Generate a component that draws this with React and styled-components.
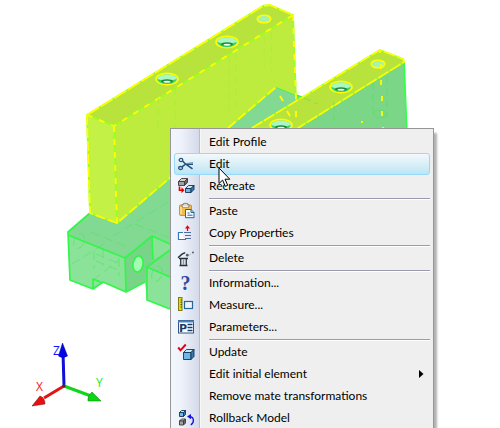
import styled, { createGlobalStyle } from "styled-components";

const GlobalStyle = createGlobalStyle`
  body {
    margin: 0;
    background: #ffffff;
    font-family: Lato, "Open Sans", sans-serif;
  }
`;

const Viewport = styled.main`
  position: relative;
  height: 100vh;
  overflow: hidden;
  background-color: #ffffff;
`;

const Drawing = styled.svg`
  display: block;
`;

const Menu = styled.div`
  position: absolute;
  left: 170px;
  top: 128px;
  box-sizing: border-box;
  min-width: 264px;
  padding: 2px 3px;
  border: 1px solid #979797;
  background: linear-gradient(
      to right,
      #f1f5fc 3px,
      #eef2fa 10px,
      #d5daea 28px,
      #b9bdd0 28px,
      #b9bdd0 29px,
      #f7f7f7 29px,
      #f7f7f7 30px,
      #efefef 30px
    )
    #efefef;
  box-shadow: 4px 4px 2px -1px rgba(0, 0, 0, 0.3);
`;

const Item = styled.button`
  display: grid;
  grid-template-columns: 24px 1fr 8px;
  column-gap: 8px;
  align-items: center;
  box-sizing: border-box;
  width: 100%;
  height: 22px;
  padding: 0 2px;
  border: 1px solid ${(props) => (props.$active ? "#96d9f9" : "transparent")};
  border-radius: 3px;
  background: ${(props) =>
    props.$active
      ? "linear-gradient(#f2f9fc, #dcf0f8 45%, #bbe5f5)"
      : "transparent"};
  color: #000000;
  font-family: inherit;
  font-size: 12px;
  line-height: 20px;
  text-align: left;
  white-space: nowrap;
`;

const Separator = styled.hr`
  height: 1px;
  margin: 1px 0 0 35px;
  border: none;
  border-bottom: 1px solid #ffffff;
  background-color: #9a9ab2;
`;

const Icon = styled.svg`
  display: block;
  width: 18px;
  height: 18px;
  overflow: visible;
`;

const Arrow = styled.svg`
  display: block;
  width: 5px;
  height: 8px;
`;

const Pointer = styled.svg`
  position: absolute;
  left: 218px;
  top: 167px;
  pointer-events: none;
`;

function Cube({ x, y, w, h, d = 3, top, front, side, line }) {
  return (
    <g stroke={line} strokeWidth="0.9" strokeLinejoin="round">
      <path d={`M${x} ${y + d}l${d} ${-d}h${w - d}l${-d} ${d}z`} fill={top} />
      <path d={`M${x} ${y + d}h${w - d}v${h - d}h${d - w}z`} fill={front} />
      <path d={`M${x + w - d} ${y + d}l${d} ${-d}v${h - d}l${-d} ${d}z`} fill={side} />
    </g>
  );
}

const blue = { top: "#c4e8fc", front: "#6bb8ec", side: "#3a7ab0", line: "#143654" };
const gray = { top: "#d2d2d2", front: "#a2a2a2", side: "#6a6a6a", line: "#3a3a3a" };

const icons = {
  edit: (
    <g fill="none" stroke="#24527e">
      <ellipse cx="4" cy="5" rx="1.8" ry="1.6" strokeWidth="1.3" />
      <ellipse cx="3.6" cy="13" rx="2" ry="1.5" strokeWidth="1.3" />
      <path d="M5.5 6l3 3 7 4.8M5 11.9l3.5-2.7h7.5" strokeWidth="1.6" />
      <path d="M9 8.6l7-1" stroke="#6f91ae" />
    </g>
  ),
  recreate: (
    <>
      <Cube x={1.5} y={1.5} w={9} h={7} {...gray} />
      <Cube x={8.5} y={8.5} w={8.5} h={7} {...blue} />
      <path d="M2.5 9.5v3.7h3" fill="none" stroke="#e00000" strokeWidth="1.6" />
      <path d="M4.5 10.3l3 3-3 3z" fill="#e00000" />
    </>
  ),
  paste: (
    <>
      <rect x="2.5" y="3" width="12" height="10.5" rx="1" fill="#f0bd55" stroke="#ca9537" />
      <path d="M4 5v7" stroke="#ffe09a" strokeWidth="1.5" />
      <path d="M5 5V2.5h1.5V1.4h4v1.1H12V5z" fill="#e1dac9" stroke="#8c8371" />
      <path d="M6 4.5h5" stroke="#f6f2e5" />
      <path d="M8.5 7.5H14l3 3v5.2H8.5z" fill="#f5fbff" stroke="#28678f" />
      <path d="M14 7.5v3h3M10.5 11h2M10.5 13.2h5" fill="none" stroke="#28678f" />
    </>
  ),
  copy: (
    <>
      <path d="M6 8.5H1.5v7h7V15" fill="none" stroke="#3477ba" strokeWidth="1.2" />
      <path d="M2 9h4v5h2v1H2z" fill="#ffffff" />
      <path d="M7 8.5h7M8 11.5h6M8 14.5h6" stroke="#526da4" />
      <path d="M10.5 3v4" stroke="#e60000" strokeWidth="1.2" />
      <path d="M8 4.5l2.5-3.2L13 4.5z" fill="#ef0000" />
    </>
  ),
  remove: (
    <>
      <path d="M1 8.8l4-3.6 3.2-1.6" fill="none" stroke="#26333b" strokeWidth="1.5" />
      <path d="M3.5 9.5h6V16h-6z" fill="#d8dce2" />
      <path d="M2 9.5h9M2.5 16.5h8" stroke="#26333b" strokeWidth="1.3" />
      <path d="M3.7 10v6M9.3 10v6" stroke="#26333b" strokeWidth="1.2" />
      <path d="M6.5 10.5v5.5" stroke="#8d969e" />
      <circle cx="10.3" cy="6.2" r="1.4" fill="#52616e" />
      <path d="M12.5 6l1.2-1" stroke="#9aa5b1" />
      <circle cx="16" cy="3.6" r="1" fill="#52616e" />
    </>
  ),
  information: (
    <text x="8.5" y="16" textAnchor="middle" fontFamily="Liberation Serif, serif" fontSize="20" fontWeight="700" fill="#2c4b9e">
      ?
    </text>
  ),
  measure: (
    <>
      <rect x="1.5" y="1.5" width="3.5" height="13" fill="#e7df00" stroke="#807b16" />
      <path d="M3.5 4H5M3.5 6.3H5M3.5 8.6H5M3.5 11H5" stroke="#555000" />
      <rect x="7.5" y="5.5" width="8" height="7" fill="#eef5fa" stroke="#24679c" strokeWidth="1.2" />
    </>
  ),
  parameters: (
    <>
      <rect x="1.5" y="2.5" width="15" height="12.5" fill="#ffffff" stroke="#2e5482" />
      <path d="M1 3.5h16" stroke="#4a80bd" strokeWidth="2" />
      <text x="2" y="14" fontFamily="DejaVu Sans, sans-serif" fontSize="11" fontWeight="700" fill="#173c69">
        P
      </text>
      <path d="M10.5 6.5h5M10.5 9.5h5M10.5 12.5h5" stroke="#173c69" strokeWidth="1.6" />
    </>
  ),
  update: (
    <>
      <Cube x={6.5} y={6.5} w={10.5} h={10} {...blue} />
      <path d="M1.2 4.5l2.3 2.8L8.8 1.5" fill="none" stroke="#e3001b" strokeWidth="2" />
    </>
  ),
  rollback: (
    <>
      <Cube x={2.5} y={1.5} w={6} h={6} d={2} {...blue} />
      <Cube x={2.5} y={10} w={6} h={6} d={2} {...gray} />
      <path d="M12 7.5c5 0 6 5.5 1.8 8.5" fill="none" stroke="#1717d8" strokeWidth="1.3" />
      <path d="M10 7.6l4-2.6v5.2z" fill="#1717d8" />
    </>
  ),
};

const groups = [
  [
    { label: "Edit Profile" },
    { label: "Edit", icon: "edit", active: true },
    { label: "Recreate", icon: "recreate" },
  ],
  [
    { label: "Paste", icon: "paste" },
    { label: "Copy Properties", icon: "copy" },
  ],
  [{ label: "Delete", icon: "remove" }],
  [
    { label: "Information...", icon: "information" },
    { label: "Measure...", icon: "measure" },
    { label: "Parameters...", icon: "parameters" },
  ],
  [
    { label: "Update", icon: "update" },
    { label: "Edit initial element", submenu: true },
    { label: "Remove mate transformations" },
    { label: "Rollback Model", icon: "rollback" },
  ],
];

function Hole({ x, y, small }) {
  if (small) {
    return <ellipse cx={x} cy={y} rx="6.8" ry="3.8" fill="#a4f2b0" stroke="#ffff00" strokeWidth="1.6" />;
  }
  return (
    <g>
      <ellipse cx={x} cy={y} rx="11" ry="5.8" fill="#b8e33c" stroke="#ffff00" strokeWidth="1.6" />
      <ellipse cx={x} cy={y} rx="10" ry="4.6" fill="#a9f8c4" />
      <path d={`M${x - 10} ${y}q10 3.5 20 0q-2 5-10 5t-10-5`} fill="#35d85a" />
      <ellipse cx={x} cy={y + 2.2} rx="6" ry="2" fill="#208a3c" />
      <ellipse cx={x} cy={y + 2.8} rx="3.5" ry="1" fill="#e9fff0" />
    </g>
  );
}

function Model() {
  return (
    <g strokeLinejoin="round">
      {/* base */}
      <path d="M90 213L276 87l28 11 103 40v60L170 309l-23-9-2-18-19 10-23-10-10 7-23-9-2-48z" fill="#82da92" />
      <path d="M68 235l57 23 1 34-23-10-10 7-23-9z" fill="#8ae398" />
      <path d="M125 258l27-22 1 24-6 7-2 15-19 10z" fill="#78d486" />
      <path d="M152 236l18 8v6l-17 10z" fill="#89e297" />
      <path d="M147 267l23 10v32l-23-9z" fill="#8ae398" />
      <g fill="none" stroke="#32f64a" strokeWidth="1.7">
        <path d="M90 213l-22 19 2 48 23 9 10-7 23 10 19-10M68 235l57 23 1 34M125 258l27-22 18 8M152 236l1 24M170 250l-23 17 23 10M147 267v33l23 9M93 289v-10l10 4M276 87l28 11" />
      </g>
      <g fill="none" stroke="#48e45b" strokeWidth="0.8" strokeDasharray="9 5" opacity="0.6">
        <path d="M113 236l57-35M72 264l32-20M91 232l34 14M93 280l26-20M94 251v18M119 258v18M103 249v17M96 254l22 9M96 261l22 9M135 224l35 14" />
        <ellipse cx="79" cy="241" rx="5" ry="8" transform="rotate(20 79 241)" />
        <ellipse cx="157" cy="274" rx="5" ry="8" transform="rotate(20 157 274)" />
      </g>
      <ellipse cx="138" cy="264" rx="5" ry="8" transform="rotate(10 138 264)" fill="#a5fbb1" stroke="#2ef646" strokeWidth="1.6" />

      {/* front bar */}
      <path d="M299 127L404 62l3 76H299z" fill="#7cd687" />
      <path d="M404 62l3 76" stroke="#31ff4a" strokeWidth="1.8" />
      <path d="M252 128L380 50l23 9 1 3-106 66z" fill="#b8e33c" stroke="#9bff20" strokeWidth="1.8" />
      <path d="M252 128L380 50l23 9 1 3-106 66" fill="none" stroke="#ffff00" strokeWidth="1.6" strokeDasharray="12 2" />
      <path d="M334 102v24M373 83v34M387 76v42M304 98l14 6" stroke="#50e158" strokeWidth="0.8" strokeDasharray="7 5" fill="none" opacity="0.7" />
      <ellipse cx="380" cy="114" rx="6" ry="4" fill="none" stroke="#54de5b" strokeWidth="0.8" opacity="0.7" />

      {/* rear bar */}
      <path d="M114 126L293 15l3 80-20-8-159 136z" fill="#bdec3e" />
      <path d="M87 115l27 11 3 97-27-10z" fill="#c3f146" />
      <path d="M87 115L263 6l7-1 23 10-179 111z" fill="#b8e33c" />
      <path d="M87 115L263 6l7-1 23 10-179 111zM114 126l3 97-27-10-3-98M117 223L276 87M293 15l3 85" fill="none" stroke="#9bff20" strokeWidth="1.8" />
      <path d="M87 115L263 6l7-1 23 10" fill="none" stroke="#ffff00" strokeWidth="1.8" strokeDasharray="14 2" />
      <path d="M293 15L114 126l-27-11M114 126l3 97M293 15l3 85" fill="none" stroke="#ffff00" strokeWidth="1.8" strokeDasharray="6 7" />
      <path d="M87 115l3 98 27 10L276 87" fill="none" stroke="#ffff00" strokeWidth="1.8" strokeDasharray="10 3" />
      <path d="M158 84v44M175 75v53M229 44v73M236 40v67M264 24v45M271 20v52" stroke="#a7ef35" strokeWidth="0.8" strokeDasharray="8 4" />

      <Hole x={167} y={79} />
      <Hole x={227} y={42} />
      <Hole x={264} y={19} small />
      <Hole x={281} y={125} />
      <Hole x={341} y={87} />
      <Hole x={378} y={64} small />
      <path d="M280 96l3 5M287 111l3 5M296 111v6M380 50v3M381 64v5M381 80v5M382 96v5M382 111v5M362 121v2M383 127v1" stroke="#ffff00" strokeWidth="1.8" />
    </g>
  );
}

function Axes() {
  return (
    <g fontFamily="Open Sans, sans-serif" fontSize="12">
      <path d="M64 386l-1-34" stroke="#1010d8" strokeWidth="3" />
      <path d="M62.5 343l5 13q-5 3-9 0z" fill="#0505e8" stroke="#050579" strokeWidth="0.5" />
      <path d="M64 386l-20 12" stroke="#df1515" strokeWidth="3" />
      <path d="M32 406l8-10q5 2 5 8z" fill="#e71010" stroke="#7d0909" strokeWidth="0.5" />
      <path d="M64 386l27 10" stroke="#10d51a" strokeWidth="3" />
      <path d="M101 401l-13 0q-1-5 4-9z" fill="#0ad614" stroke="#087d0a" strokeWidth="0.5" />
      <circle cx="64" cy="386" r="1.6" fill="#55203a" />
      <text x="53" y="355" fill="#1515ff">Z</text>
      <text x="36" y="391" fill="#ff1515">X</text>
      <text x="96" y="387" fill="#10ee15">Y</text>
    </g>
  );
}

function ContextMenu() {
  return (
    <Menu role="menu">
      {groups.map((items, index) => (
        <div key={index} role="group">
          {index > 0 && <Separator />}
          {items.map((item) => (
            <Item key={item.label} role="menuitem" type="button" $active={item.active}>
              <Icon viewBox="0 0 18 18" aria-hidden="true">
                {icons[item.icon]}
              </Icon>
              <span>{item.label}</span>
              {item.submenu && (
                <Arrow viewBox="0 0 5 8" aria-hidden="true">
                  <path d="M0 0l4.5 4L0 8z" />
                </Arrow>
              )}
            </Item>
          ))}
        </div>
      ))}
    </Menu>
  );
}

function App() {
  return (
    <Viewport>
      <GlobalStyle />
      <Drawing width="500" height="428" viewBox="0 0 500 428" role="img" aria-label="3D model">
        <Model />
        <Axes />
      </Drawing>
      <ContextMenu />
      <Pointer width="13" height="21" viewBox="0 0 13 21" aria-hidden="true">
        <path d="M1 1v15.5l3.6-3.4 2.7 6.2 2.4-1-2.7-6.1h4.8z" fill="#ffffff" stroke="#000000" />
      </Pointer>
    </Viewport>
  );
}

export default App;
